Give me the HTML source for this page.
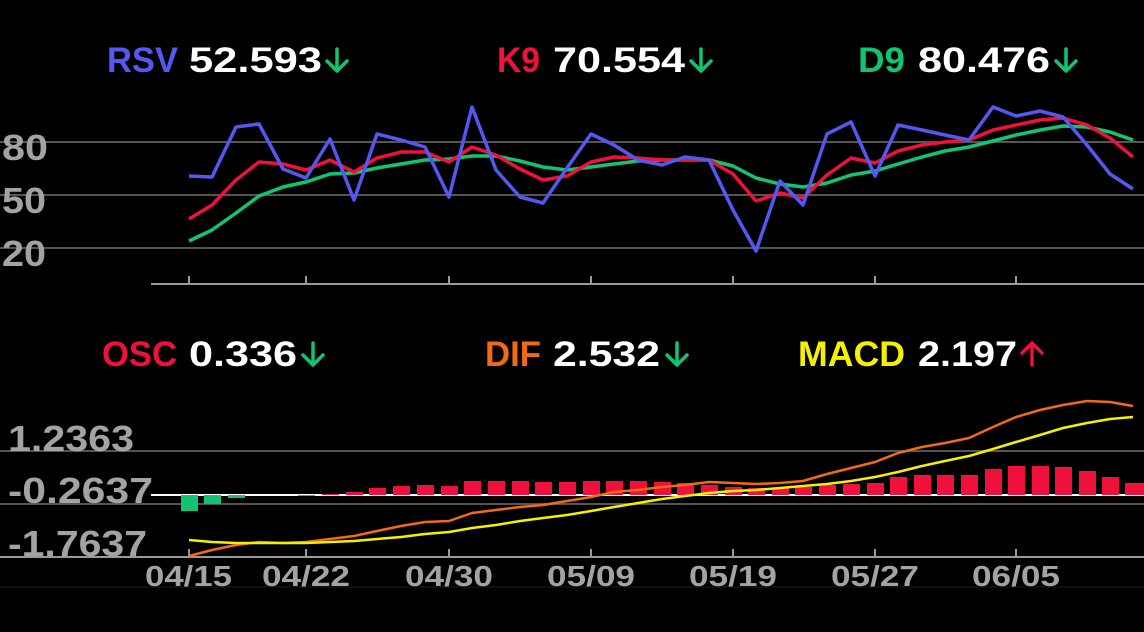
<!DOCTYPE html>
<html><head><meta charset="utf-8"><style>
html,body{margin:0;padding:0;background:#000;width:1144px;height:632px;overflow:hidden}
svg{display:block}
text{font-family:"Liberation Sans",sans-serif;font-weight:bold}
.h{font-size:35px}
.v{fill:#fff}
.ax{fill:#a3a3a3;font-size:36px}
.dt{fill:#a3a3a3;font-size:29px}
</style></head><body>
<svg width="1144" height="632" viewBox="0 0 1144 632">
<!-- headers -->
<text class="h" x="107" y="72" fill="#5558f0" textLength="71" lengthAdjust="spacingAndGlyphs">RSV</text><text class="h v" x="189" y="72" textLength="133" lengthAdjust="spacingAndGlyphs">52.593</text>
<text class="h" x="497" y="72" fill="#f0103c" textLength="43" lengthAdjust="spacingAndGlyphs">K9</text><text class="h v" x="553" y="72" textLength="132" lengthAdjust="spacingAndGlyphs">70.554</text>
<text class="h" x="858" y="72" fill="#12c472" textLength="47" lengthAdjust="spacingAndGlyphs">D9</text><text class="h v" x="918" y="72" textLength="132" lengthAdjust="spacingAndGlyphs">80.476</text>
<text class="h" x="102" y="366" fill="#f0103c" textLength="75" lengthAdjust="spacingAndGlyphs">OSC</text><text class="h v" x="189" y="366" textLength="108" lengthAdjust="spacingAndGlyphs">0.336</text>
<text class="h" x="485" y="366" fill="#f26a12" textLength="56" lengthAdjust="spacingAndGlyphs">DIF</text><text class="h v" x="553" y="366" textLength="107" lengthAdjust="spacingAndGlyphs">2.532</text>
<text class="h" x="798" y="366" fill="#f5f000" textLength="107" lengthAdjust="spacingAndGlyphs">MACD</text><text class="h v" x="918" y="366" textLength="99" lengthAdjust="spacingAndGlyphs">2.197</text>
<g stroke-width="3.5" fill="none" stroke-linecap="round" stroke-linejoin="round">
<g stroke="#12c472"><path d="M337 49v22M327 61l10 10 10-10"/><path d="M701 49v22M691 61l10 10 10-10"/><path d="M1066 49v22M1056 61l10 10 10-10"/><path d="M313 343v22M303 355l10 10 10-10"/><path d="M677 343v22M667 355l10 10 10-10"/></g>
<path stroke="#f0103c" d="M1032 365v-22M1022 353l10-10 10 10"/>
</g>
<!-- top grid -->
<g stroke="#555" stroke-width="2"><line x1="0" y1="142" x2="1144" y2="142"/><line x1="0" y1="195" x2="1144" y2="195"/><line x1="0" y1="248" x2="1144" y2="248"/></g>
<line x1="151" y1="284" x2="1144" y2="284" stroke="#9a9a9a" stroke-width="2"/>
<g stroke="#9a9a9a" stroke-width="2"><line x1="189" y1="276" x2="189" y2="284"/><line x1="306" y1="276" x2="306" y2="284"/><line x1="449" y1="276" x2="449" y2="284"/><line x1="591" y1="276" x2="591" y2="284"/><line x1="733" y1="276" x2="733" y2="284"/><line x1="875" y1="276" x2="875" y2="284"/><line x1="1016" y1="276" x2="1016" y2="284"/></g>
<text class="ax" x="2" y="160" textLength="46" lengthAdjust="spacingAndGlyphs">80</text><text class="ax" x="2" y="213" textLength="44" lengthAdjust="spacingAndGlyphs">50</text><text class="ax" x="2" y="266" textLength="44" lengthAdjust="spacingAndGlyphs">20</text>
<g fill="none" stroke-width="3.5" stroke-linejoin="round">
<polyline stroke="#12c472" points="189,241 212,230 236,213 259,196 283,187 306,182 330,174 354,173 377,168 401,164 425,160 449,159 472,156 496,156 520,161 543,167 567,170 591,167 614,164 638,161 662,160 685,160 709,160 733,166 756,178 780,184 803,187 827,183 851,175 875,171 898,164 922,157 945,151 969,147 993,141 1016,135 1040,130 1063,126 1087,127 1110,132 1133,140"/>
<polyline stroke="#f0103c" points="189,219 212,205 236,180 259,162 283,164 306,170 330,160 354,172 377,158 401,152 425,152 449,162 472,147 496,155 520,169 543,180 567,176 591,162 614,157 638,158 662,160 685,160 709,160 733,174 756,201 780,193 803,198 827,175 851,158 875,163 898,151 922,145 945,142 969,140 993,130 1016,125 1040,120 1063,118 1087,125 1110,138 1133,157"/>
<polyline stroke="#5558f0" points="189,176 212,177 236,127 259,124 283,169 306,178 330,139 354,200 377,134 401,140 425,147 449,197 472,107 496,170 520,197 543,203 567,168 591,134 614,145 638,160 662,165 685,157 709,160 733,210 756,251 780,181 803,205 827,134 851,122 875,176 898,125 922,130 945,135 969,140 993,107 1016,116 1040,111 1063,117 1087,145 1110,174 1133,189"/>
</g>
<!-- bottom grid -->
<g stroke="#555" stroke-width="2"><line x1="0" y1="451" x2="1144" y2="451"/><line x1="0" y1="504" x2="1144" y2="504"/></g>
<line x1="151" y1="495" x2="1144" y2="495" stroke="#fff" stroke-width="2"/>
<line x1="0" y1="557" x2="1144" y2="557" stroke="#9a9a9a" stroke-width="2"/>
<g stroke="#9a9a9a" stroke-width="2"><line x1="189" y1="549" x2="189" y2="557"/><line x1="306" y1="549" x2="306" y2="557"/><line x1="449" y1="549" x2="449" y2="557"/><line x1="591" y1="549" x2="591" y2="557"/><line x1="733" y1="549" x2="733" y2="557"/><line x1="875" y1="549" x2="875" y2="557"/><line x1="1016" y1="549" x2="1016" y2="557"/></g>
<text class="ax" x="8" y="451" textLength="126" lengthAdjust="spacingAndGlyphs">1.2363</text><text class="ax" x="8" y="503" textLength="145" lengthAdjust="spacingAndGlyphs">-0.2637</text><text class="ax" x="8" y="556" textLength="139" lengthAdjust="spacingAndGlyphs">-1.7637</text>
<g fill="#12c472"><rect x="181" y="495" width="17" height="16"/><rect x="204" y="495" width="17" height="9"/><rect x="228" y="495" width="17" height="3"/><rect x="298" y="495" width="17" height="1"/></g>
<g fill="#f0103c">
<rect x="322" y="494" width="17" height="1"/><rect x="346" y="492" width="17" height="3"/><rect x="369" y="488" width="17" height="7"/><rect x="393" y="486" width="17" height="9"/><rect x="417" y="485" width="17" height="10"/><rect x="441" y="486" width="17" height="9"/><rect x="464" y="481" width="17" height="14"/><rect x="488" y="481" width="17" height="14"/><rect x="512" y="481" width="17" height="14"/><rect x="535" y="482" width="17" height="13"/><rect x="559" y="482" width="17" height="13"/><rect x="583" y="481" width="17" height="14"/><rect x="606" y="481" width="17" height="14"/><rect x="630" y="481" width="17" height="14"/><rect x="654" y="482" width="17" height="13"/><rect x="677" y="483" width="17" height="12"/><rect x="701" y="485" width="17" height="10"/><rect x="725" y="487" width="17" height="8"/><rect x="748" y="488" width="17" height="7"/><rect x="772" y="488" width="17" height="7"/><rect x="795" y="487" width="17" height="8"/><rect x="819" y="485" width="17" height="10"/><rect x="843" y="484" width="17" height="11"/><rect x="867" y="483" width="17" height="12"/><rect x="890" y="477" width="17" height="18"/><rect x="914" y="475" width="17" height="20"/><rect x="937" y="475" width="17" height="20"/><rect x="961" y="475" width="17" height="20"/><rect x="985" y="469" width="17" height="26"/><rect x="1008" y="466" width="17" height="29"/><rect x="1032" y="466" width="17" height="29"/><rect x="1055" y="467" width="17" height="28"/><rect x="1079" y="471" width="17" height="24"/><rect x="1102" y="477" width="17" height="18"/><rect x="1125" y="483" width="19" height="12"/>
</g>
<g fill="none" stroke-width="2.5" stroke-linejoin="round">
<polyline stroke="#f26a12" points="189,556 212,550 236,545 259,542 283,543 306,542 330,539 354,536 377,531 401,526 425,522 449,521 472,513 496,510 520,507 543,505 567,501 591,497 614,492 638,490 662,487 685,485 709,482 733,483 756,484 780,483 803,481 827,474 851,468 875,462 898,453 922,447 945,443 969,438 993,427 1016,417 1040,410 1063,405 1087,401 1110,402 1133,406"/>
<polyline stroke="#f5f000" points="189,540 212,542 236,543 259,543 283,543 306,543 330,542 354,541 377,539 401,537 425,534 449,532 472,528 496,525 520,521 543,518 567,515 591,511 614,507 638,503 662,499 685,496 709,493 733,491 756,490 780,488 803,486 827,484 851,481 875,477 898,472 922,466 945,461 969,456 993,449 1016,442 1040,435 1063,428 1087,423 1110,419 1133,417"/>
</g>
<g lengthAdjust="spacingAndGlyphs">
<text class="dt" x="145" y="586" textLength="87" lengthAdjust="spacingAndGlyphs">04/15</text><text class="dt" x="262" y="586" textLength="88" lengthAdjust="spacingAndGlyphs">04/22</text><text class="dt" x="405" y="586" textLength="88" lengthAdjust="spacingAndGlyphs">04/30</text><text class="dt" x="547" y="586" textLength="88" lengthAdjust="spacingAndGlyphs">05/09</text><text class="dt" x="689" y="586" textLength="88" lengthAdjust="spacingAndGlyphs">05/19</text><text class="dt" x="831" y="586" textLength="88" lengthAdjust="spacingAndGlyphs">05/27</text><text class="dt" x="972" y="586" textLength="88" lengthAdjust="spacingAndGlyphs">06/05</text>
</g>
<line x1="0" y1="587" x2="1144" y2="587" stroke="#1a1d2a" stroke-width="1"/>
</svg>
</body></html>
